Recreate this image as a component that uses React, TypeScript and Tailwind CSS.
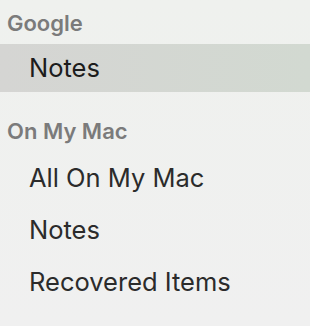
const Header = ({ label, height }: { label: string; height: string }) => (
  <div className={`${height} flex items-end pb-[10px] pl-[7px] text-[22px] font-semibold text-[#7b7b7b] leading-none`}>
    <span>{label}</span>
  </div>
)

const Item = ({ label, selected }: { label: string; selected?: boolean }) => (
  <div
    className={
      selected
        ? "h-[48px] flex items-center pl-[29px] text-[25.5px] leading-none text-[#1c1c1c] bg-gradient-to-r from-[#d5d5d3] to-[#d2d9d1]"
        : "h-[52px] flex items-center pl-[29px] text-[25.5px] leading-none text-[#2b2b2b]"
    }
  >
    <span>{label}</span>
  </div>
)

export default function App() {
  return (
    <div
      className="w-[310px] h-[326px] overflow-hidden bg-gradient-to-b from-[#eff1ee] to-[#f0f0f0]"
      style={{ fontFamily: "Inter, 'Liberation Sans', sans-serif" }}
    >
      <Header label="Google" height="h-[44px]" />
      <Item label="Notes" selected />
      <Header label="On My Mac" height="h-[60px]" />
      <Item label="All On My Mac" />
      <Item label="Notes" />
      <Item label="Recovered Items" />
    </div>
  )
}
